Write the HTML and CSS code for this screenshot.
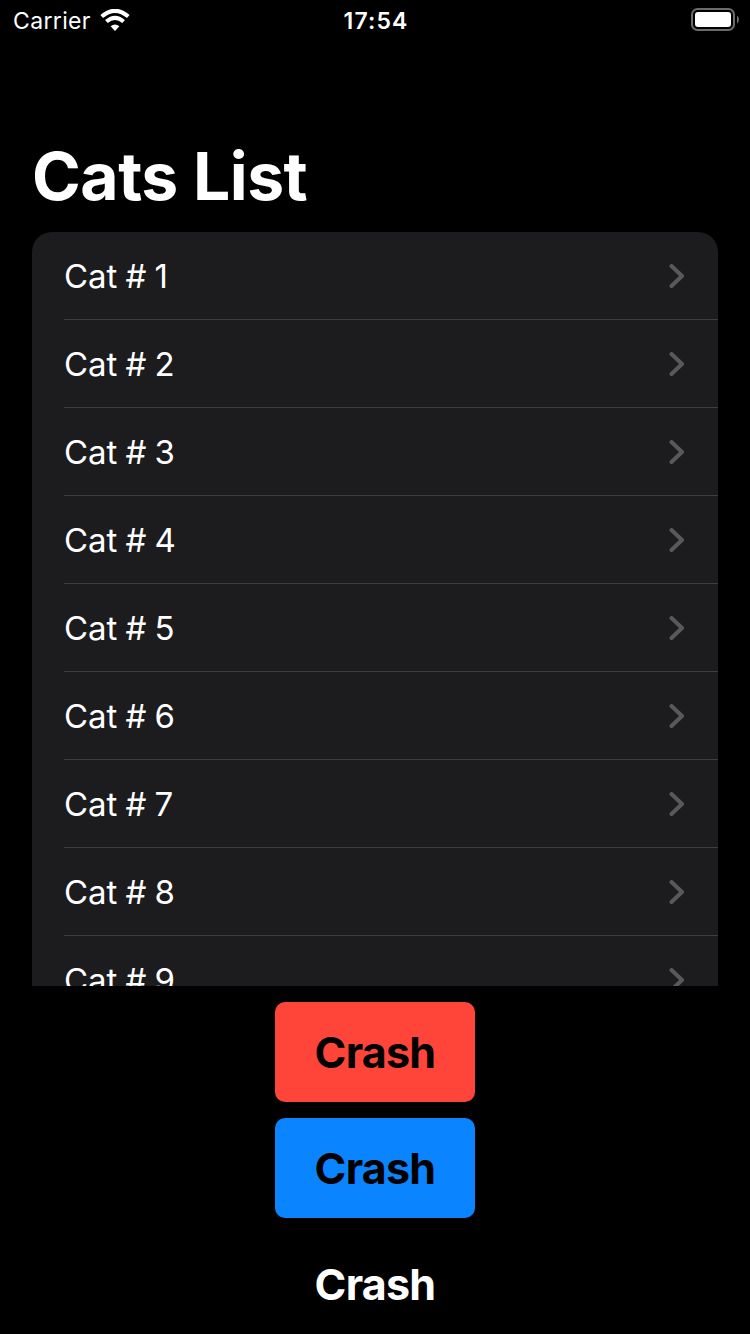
FILE: index.html
```html
<!DOCTYPE html>
<html lang="en">
<head>
<meta charset="utf-8">
<title>Cats List</title>
<link rel="stylesheet" href="styles.css">
</head>
<body>
<svg class="symbols"><symbol id="chevron" viewBox="0 0 16 26"><path d="M2.5 3 13 13 2.5 23"/></symbol></svg>
<main class="screen">
  <header class="status">
    <div class="carrier"><span class="carrier-name">Carrier</span>
      <svg class="wifi" viewBox="0 0 30 22"><path d="M1.7 7.6Q15-4 28.3 7.6M6.4 12.6Q15 5.2 23.6 12.6"/><path class="dot" d="M15 22 10.6 17.3Q15 13.8 19.4 17.3Z"/></svg></div>
    <time class="clock">17:54</time>
    <div class="power"><svg class="battery" viewBox="0 0 48 23"><rect class="case" x="1" y="1" width="42" height="21" rx="5.5"/><rect class="charge" x="4" y="4" width="36" height="15" rx="3"/><path class="tip" d="M46 7.5Q48 9 48 11.5T46 15.5Z"/></svg></div>
  </header>
  <h1 class="title"><span>Cats List</span></h1>
  <ul class="list">
    <li class="row"><span class="label">Cat # 1</span><svg class="chevron"><use href="#chevron"/></svg></li>
    <li class="row"><span class="label">Cat # 2</span><svg class="chevron"><use href="#chevron"/></svg></li>
    <li class="row"><span class="label">Cat # 3</span><svg class="chevron"><use href="#chevron"/></svg></li>
    <li class="row"><span class="label">Cat # 4</span><svg class="chevron"><use href="#chevron"/></svg></li>
    <li class="row"><span class="label">Cat # 5</span><svg class="chevron"><use href="#chevron"/></svg></li>
    <li class="row"><span class="label">Cat # 6</span><svg class="chevron"><use href="#chevron"/></svg></li>
    <li class="row"><span class="label">Cat # 7</span><svg class="chevron"><use href="#chevron"/></svg></li>
    <li class="row"><span class="label">Cat # 8</span><svg class="chevron"><use href="#chevron"/></svg></li>
    <li class="row"><span class="label">Cat # 9</span><svg class="chevron"><use href="#chevron"/></svg></li>
  </ul>
  <div class="actions">
    <button class="crash red">Crash</button>
    <button class="crash blue">Crash</button>
    <button class="crash plain">Crash</button>
  </div>
</main>
</body>
</html>
```
FILE: styles.css
```css
* { box-sizing: border-box; }
body { margin: 0; background: #000; color: #fff; font-family: Inter, sans-serif; }
.symbols { display: none; }
.screen { width: 750px; height: 1334px; overflow: hidden; display: flex; flex-direction: column; }
.status { height: 40px; display: grid; grid-template-columns: 1fr auto 1fr; align-items: center; padding: 0 11px 0 13px; font-size: 23px; }
.carrier { display: flex; align-items: center; gap: 9px; }
.carrier-name { padding-top: 2px; letter-spacing: .35px; }
.wifi { width: 30px; height: 22px; fill: none; stroke: #fff; stroke-width: 4; }
.wifi .dot { fill: #fff; stroke: none; }
.clock { padding-top: 2px; font-weight: 600; letter-spacing: 1.1px; }
.power { display: flex; justify-content: flex-end; }
.battery { width: 48px; height: 23px; margin-bottom: 1px; }
.case { fill: none; stroke: #6b6b6b; stroke-width: 2; }
.charge { fill: #fff; }
.tip { fill: #6b6b6b; }
.title { margin: 0; height: 192px; padding: 95px 32px 0; font-size: 66px; line-height: 82px; font-weight: 700; letter-spacing: -.5px; }
.list { list-style: none; margin: 0 32px; padding: 0 0 0 32px; height: 754px; overflow: hidden; background: #1c1c1e; border-radius: 20px 20px 0 0; }
.row { height: 88px; display: flex; align-items: center; justify-content: space-between; padding-right: 33px; border-bottom: 1px solid #3d3d41; font-size: 33px; }
.label { letter-spacing: -.1px; word-spacing: -.9px; }
.chevron { width: 16px; height: 26px; fill: none; stroke: #59595b; stroke-width: 4; stroke-linecap: round; stroke-linejoin: round; }
.actions { display: flex; flex-direction: column; align-items: center; gap: 16px; padding-top: 16px; }
.crash { width: 200px; height: 100px; border: 0; border-radius: 10px; padding: 0; font: 700 43px Inter, sans-serif; letter-spacing: -.75px; color: #000; }
.red { background: #ff453a; }
.blue { background: #0a84ff; }
.plain { background: none; color: #fff; }
```
